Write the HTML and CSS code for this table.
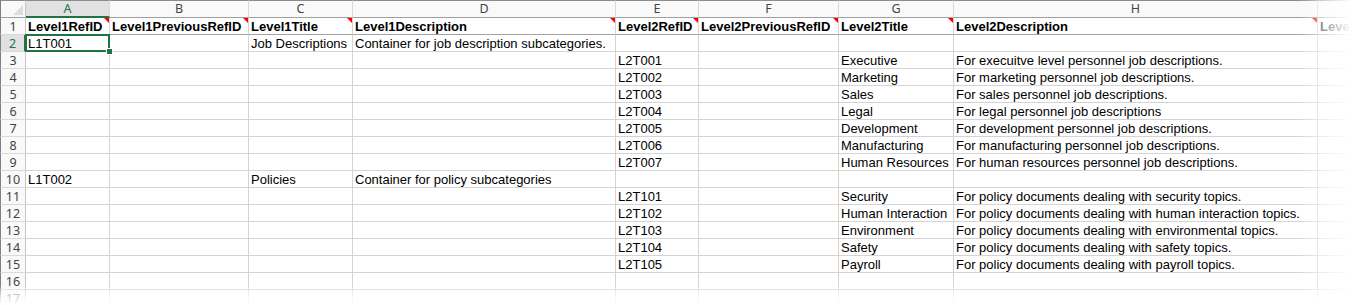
FILE: index.html
```html
<!DOCTYPE html>
<html>
<head>
<meta charset="utf-8">
<link rel="stylesheet" href="styles.css">
</head>
<body>
<div class="sheet">
  <div class="grid">
    <div class="h corner"><span class="corner-tri"></span></div>
    <div class="h selc">A</div><div class="h">B</div><div class="h">C</div><div class="h">D</div><div class="h">E</div><div class="h">F</div><div class="h">G</div><div class="h">H</div><div class="h"></div>

    <div class="rh r1">1</div>
    <div class="c b cm">Level1RefID</div><div class="c b cm">Level1PreviousRefID</div><div class="c b cm">Level1Title</div><div class="c b cm">Level1Description</div><div class="c b cm">Level2RefID</div><div class="c b cm">Level2PreviousRefID</div><div class="c b cm">Level2Title</div><div class="c b cm">Level2Description</div><div class="c b">Level3</div>

    <div class="rh selr">2</div>
    <div class="c sel">L1T001</div><div class="c"></div><div class="c">Job Descriptions</div><div class="c">Container for job description subcategories.</div><div class="c"></div><div class="c"></div><div class="c"></div><div class="c"></div><div class="c"></div>

    <div class="rh">3</div>
    <div class="c"></div><div class="c"></div><div class="c"></div><div class="c"></div><div class="c">L2T001</div><div class="c"></div><div class="c">Executive</div><div class="c">For execuitve level personnel job descriptions.</div><div class="c"></div>

    <div class="rh">4</div>
    <div class="c"></div><div class="c"></div><div class="c"></div><div class="c"></div><div class="c">L2T002</div><div class="c"></div><div class="c">Marketing</div><div class="c">For marketing personnel job descriptions.</div><div class="c"></div>

    <div class="rh">5</div>
    <div class="c"></div><div class="c"></div><div class="c"></div><div class="c"></div><div class="c">L2T003</div><div class="c"></div><div class="c">Sales</div><div class="c">For sales personnel job descriptions.</div><div class="c"></div>

    <div class="rh">6</div>
    <div class="c"></div><div class="c"></div><div class="c"></div><div class="c"></div><div class="c">L2T004</div><div class="c"></div><div class="c">Legal</div><div class="c">For legal personnel job descriptions</div><div class="c"></div>

    <div class="rh">7</div>
    <div class="c"></div><div class="c"></div><div class="c"></div><div class="c"></div><div class="c">L2T005</div><div class="c"></div><div class="c">Development</div><div class="c">For development personnel job descriptions.</div><div class="c"></div>

    <div class="rh">8</div>
    <div class="c"></div><div class="c"></div><div class="c"></div><div class="c"></div><div class="c">L2T006</div><div class="c"></div><div class="c">Manufacturing</div><div class="c">For manufacturing personnel job descriptions.</div><div class="c"></div>

    <div class="rh">9</div>
    <div class="c"></div><div class="c"></div><div class="c"></div><div class="c"></div><div class="c">L2T007</div><div class="c"></div><div class="c">Human Resources</div><div class="c">For human resources personnel job descriptions.</div><div class="c"></div>

    <div class="rh">10</div>
    <div class="c">L1T002</div><div class="c"></div><div class="c">Policies</div><div class="c">Container for policy subcategories</div><div class="c"></div><div class="c"></div><div class="c"></div><div class="c"></div><div class="c"></div>

    <div class="rh">11</div>
    <div class="c"></div><div class="c"></div><div class="c"></div><div class="c"></div><div class="c">L2T101</div><div class="c"></div><div class="c">Security</div><div class="c">For policy documents dealing with security topics.</div><div class="c"></div>

    <div class="rh">12</div>
    <div class="c"></div><div class="c"></div><div class="c"></div><div class="c"></div><div class="c">L2T102</div><div class="c"></div><div class="c">Human Interaction</div><div class="c">For policy documents dealing with human interaction topics.</div><div class="c"></div>

    <div class="rh">13</div>
    <div class="c"></div><div class="c"></div><div class="c"></div><div class="c"></div><div class="c">L2T103</div><div class="c"></div><div class="c">Environment</div><div class="c">For policy documents dealing with environmental topics.</div><div class="c"></div>

    <div class="rh">14</div>
    <div class="c"></div><div class="c"></div><div class="c"></div><div class="c"></div><div class="c">L2T104</div><div class="c"></div><div class="c">Safety</div><div class="c">For policy documents dealing with safety topics.</div><div class="c"></div>

    <div class="rh">15</div>
    <div class="c"></div><div class="c"></div><div class="c"></div><div class="c"></div><div class="c">L2T105</div><div class="c"></div><div class="c">Payroll</div><div class="c">For policy documents dealing with payroll topics.</div><div class="c"></div>

    <div class="rh">16</div>
    <div class="c"></div><div class="c"></div><div class="c"></div><div class="c"></div><div class="c"></div><div class="c"></div><div class="c"></div><div class="c"></div><div class="c"></div>

    <div class="rh">17</div>
    <div class="c"></div><div class="c"></div><div class="c"></div><div class="c"></div><div class="c"></div><div class="c"></div><div class="c"></div><div class="c"></div><div class="c"></div>
  </div>
  <div class="fade-right"></div>
  <div class="fade-bottom"></div>
</div>
</body>
</html>
```

FILE: styles.css
```css
html, body {
  margin: 0;
  padding: 0;
  background: #fff;
  overflow: hidden;
}

.sheet {
  position: relative;
  width: 1361px;
  height: 305px;
  overflow: hidden;
}

.grid {
  display: grid;
  grid-template-columns: 26px 84px 139px 104px 263px 83px 140px 115px 364px 1fr;
  grid-template-rows: 18px;
  grid-auto-rows: 17px;
}

.grid > div {
  box-sizing: border-box;
  overflow: hidden;
  white-space: nowrap;
}

.h {
  background: #f9f9f9;
  border-top: 1px solid #8c8c8c;
  border-right: 1px solid #d9d9d9;
  border-bottom: 1px solid #9f9f9f;
  color: #444;
  font-family: "Noto Sans", "Open Sans", sans-serif;
  font-size: 12.5px;
  line-height: 16px;
  text-align: center;
}

.h.corner {
  position: relative;
  border-left: 1px solid #7f7f7f;
  border-right: 1px solid #c6c6c6;
}

.corner-tri {
  position: absolute;
  right: 2px;
  bottom: 2px;
  width: 0;
  height: 0;
  border-bottom: 10px solid #dcdcdc;
  border-left: 10px solid transparent;
}

.h.selc {
  background: #e1e1e1;
  color: #217346;
  border-bottom: 2px solid #217346;
  line-height: 15px;
}

.rh {
  background: #f9f9f9;
  border-left: 1px solid #7f7f7f;
  border-right: 1px solid #c6c6c6;
  border-bottom: 1px solid #dadada;
  color: #444;
  font-family: "Noto Sans", "Open Sans", sans-serif;
  font-size: 12.5px;
  line-height: 17px;
  text-align: center;
}

.rh.selr {
  background: #e1e1e1;
  color: #217346;
  border-right: 2px solid #217346;
}

.c {
  position: relative;
  border-right: 1px solid #d4d4d4;
  border-bottom: 1px solid #d4d4d4;
  color: #000;
  font-family: "Liberation Sans", Arial, sans-serif;
  font-size: 13px;
  line-height: 16px;
  padding-top: 1px;
  padding-left: 2px;
}

.c.b {
  font-weight: bold;
  border-bottom: 1px solid #a3a3a3;
}

.c.cm::after {
  content: "";
  position: absolute;
  top: 0;
  right: 0;
  width: 0;
  height: 0;
  border-top: 5px solid #ff0000;
  border-left: 5px solid transparent;
}

.c.sel {
  overflow: visible;
}

.c.sel::after {
  content: "";
  position: absolute;
  top: -1px;
  left: -1px;
  right: -1px;
  bottom: -1px;
  border: 2px solid #217346;
}

.c.sel::before {
  content: "";
  position: absolute;
  right: -4px;
  bottom: -4px;
  width: 5px;
  height: 5px;
  background: #217346;
  border: 1px solid #fff;
  z-index: 2;
}

.fade-right {
  position: absolute;
  top: 0;
  right: 0;
  width: 62px;
  height: 305px;
  background: linear-gradient(to right, rgba(255,255,255,0) 0%, rgba(255,255,255,0.6) 40%, #fff 85%);
  pointer-events: none;
}

.fade-bottom {
  position: absolute;
  left: 0;
  bottom: 0;
  width: 1361px;
  height: 20px;
  background: linear-gradient(to bottom, rgba(255,255,255,0) 0%, rgba(255,255,255,0.7) 50%, #fff 100%);
  pointer-events: none;
}
```
